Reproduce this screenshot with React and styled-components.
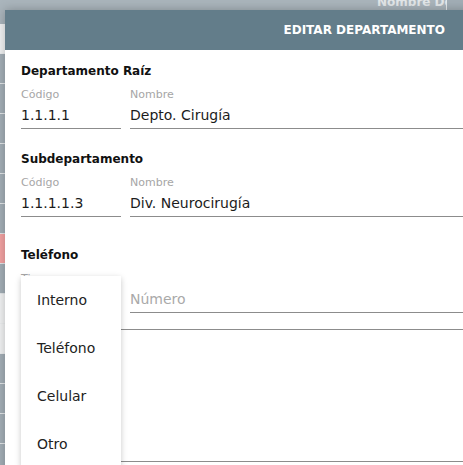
import React from "react";
import styled, { createGlobalStyle } from "styled-components";

const GlobalStyle = createGlobalStyle`
  html, body {
    margin: 0;
    padding: 0;
    overflow: hidden;
  }
  body {
    font-family: "DejaVu Sans", Verdana, sans-serif;
    background: #a9b4bb;
  }
`;

const Screen = styled.div`
  position: relative;
  width: 463px;
  height: 465px;
  overflow: hidden;
`;

// page behind the modal (already dimmed)
const BackHeader = styled.div`
  height: 24px;
  background: #aab5bc;
  display: flex;
  justify-content: flex-end;
  overflow: hidden;
`;

const BackHeadCell = styled.div`
  width: 60px;
  padding-right: 9px;
  border-right: 1px solid #e6eaec;
  overflow: hidden;
  white-space: nowrap;
  font-weight: bold;
  font-size: 12px;
  line-height: 14px;
  color: #e3e7e9;
  margin-top: -5px;
  height: 15px;
`;

const BackHeadRest = styled.div`
  width: 16px;
  background: #a2aeb6;
`;

const BackRow = styled.div`
  height: 29px;
  border-bottom: 1px solid ${(p) => (p.$tone === "light" ? "#eceeef" : "#e3e7e9")};
  background: ${(p) =>
    p.$tone === "light" ? "#f2f3f4" : p.$tone === "pink" ? "#f4a3a3" : "#a4afb7"};
`;

const Dialog = styled.div`
  position: absolute;
  left: 5px;
  top: 10px;
  width: 480px;
  height: 470px;
  background: #fff;
  box-shadow: 0 0 10px rgba(0, 0, 0, 0.25);
`;

const DialogHeader = styled.div`
  height: 40px;
  background: #637d8a;
  display: flex;
  align-items: center;
  justify-content: flex-end;
  padding: 0 40px 0 16px;
  color: #fff;
  font-weight: bold;
  font-size: 12px;
`;

const Body = styled.div`
  padding: 13px 16px 0;
`;

const Section = styled.div`
  margin-top: ${(p) => p.$gap || 0}px;
  border-bottom: ${(p) => (p.$ruled ? "1px solid #8c8c8c" : "none")};
  padding-bottom: ${(p) => (p.$ruled ? "16px" : "0")};
`;

const SectionTitle = styled.div`
  font-weight: bold;
  font-size: 12px;
  line-height: 16px;
  color: #111;
`;

const FieldRow = styled.div`
  display: flex;
  gap: 9px;
  margin-top: 9px;
`;

const Field = styled.div`
  position: relative;
  flex: ${(p) => (p.$w ? "none" : "1")};
  width: ${(p) => (p.$w ? `${p.$w}px` : "auto")};
  border-bottom: 1px solid #8c8c8c;
  padding-bottom: 3px;
`;

const Label = styled.div`
  font-size: 11px;
  line-height: 14px;
  height: 14px;
  color: #a6a6a6;
  margin-bottom: 3px;
`;

const Value = styled.div`
  font-size: 14px;
  line-height: 20px;
  height: 20px;
  color: ${(p) => (p.$placeholder ? "#a9a9a9" : "#1c1c1c")};
`;

const Filler = styled.div`
  height: 131px;
  border-bottom: 1px solid #8c8c8c;
`;

const Menu = styled.div`
  position: absolute;
  left: 0;
  top: 4px;
  width: 100px;
  background: #fff;
  box-shadow: 0 2px 6px rgba(0, 0, 0, 0.22);
  z-index: 2;
`;

const MenuItem = styled.div`
  height: 48px;
  display: flex;
  align-items: center;
  padding-left: 16px;
  font-size: 14px;
  color: #222;
`;

const rows = [
  "light",
  "grey",
  "grey",
  "grey",
  "grey",
  "grey",
  "grey",
  "pink",
  "grey",
  "light",
  "light",
  "grey",
  "grey",
  "grey",
  "grey",
];

const options = ["Interno", "Teléfono", "Celular", "Otro"];

const App = () => {
  return (
    <Screen>
      <GlobalStyle />
      <BackHeader>
        <BackHeadCell>Nombre Departamento</BackHeadCell>
        <BackHeadRest />
      </BackHeader>
      {rows.map((tone, i) => (
        <BackRow key={i} $tone={tone} />
      ))}

      <Dialog>
        <DialogHeader>EDITAR DEPARTAMENTO</DialogHeader>
        <Body>
          <Section>
            <SectionTitle>Departamento Raíz</SectionTitle>
            <FieldRow>
              <Field $w={100}>
                <Label>Código</Label>
                <Value>1.1.1.1</Value>
              </Field>
              <Field>
                <Label>Nombre</Label>
                <Value>Depto. Cirugía</Value>
              </Field>
            </FieldRow>
          </Section>

          <Section $gap={22}>
            <SectionTitle>Subdepartamento</SectionTitle>
            <FieldRow>
              <Field $w={100}>
                <Label>Código</Label>
                <Value>1.1.1.1.3</Value>
              </Field>
              <Field>
                <Label>Nombre</Label>
                <Value>Div. Neurocirugía</Value>
              </Field>
            </FieldRow>
          </Section>

          <Section $gap={30} $ruled>
            <SectionTitle>Teléfono</SectionTitle>
            <FieldRow>
              <Field $w={100}>
                <Label>Tipo</Label>
                <Value />
                <Menu>
                  {options.map((o) => (
                    <MenuItem key={o}>{o}</MenuItem>
                  ))}
                </Menu>
              </Field>
              <Field>
                <Label />
                <Value $placeholder>Número</Value>
              </Field>
            </FieldRow>
          </Section>

          <Filler />
        </Body>
      </Dialog>
    </Screen>
  );
};

export default App;
